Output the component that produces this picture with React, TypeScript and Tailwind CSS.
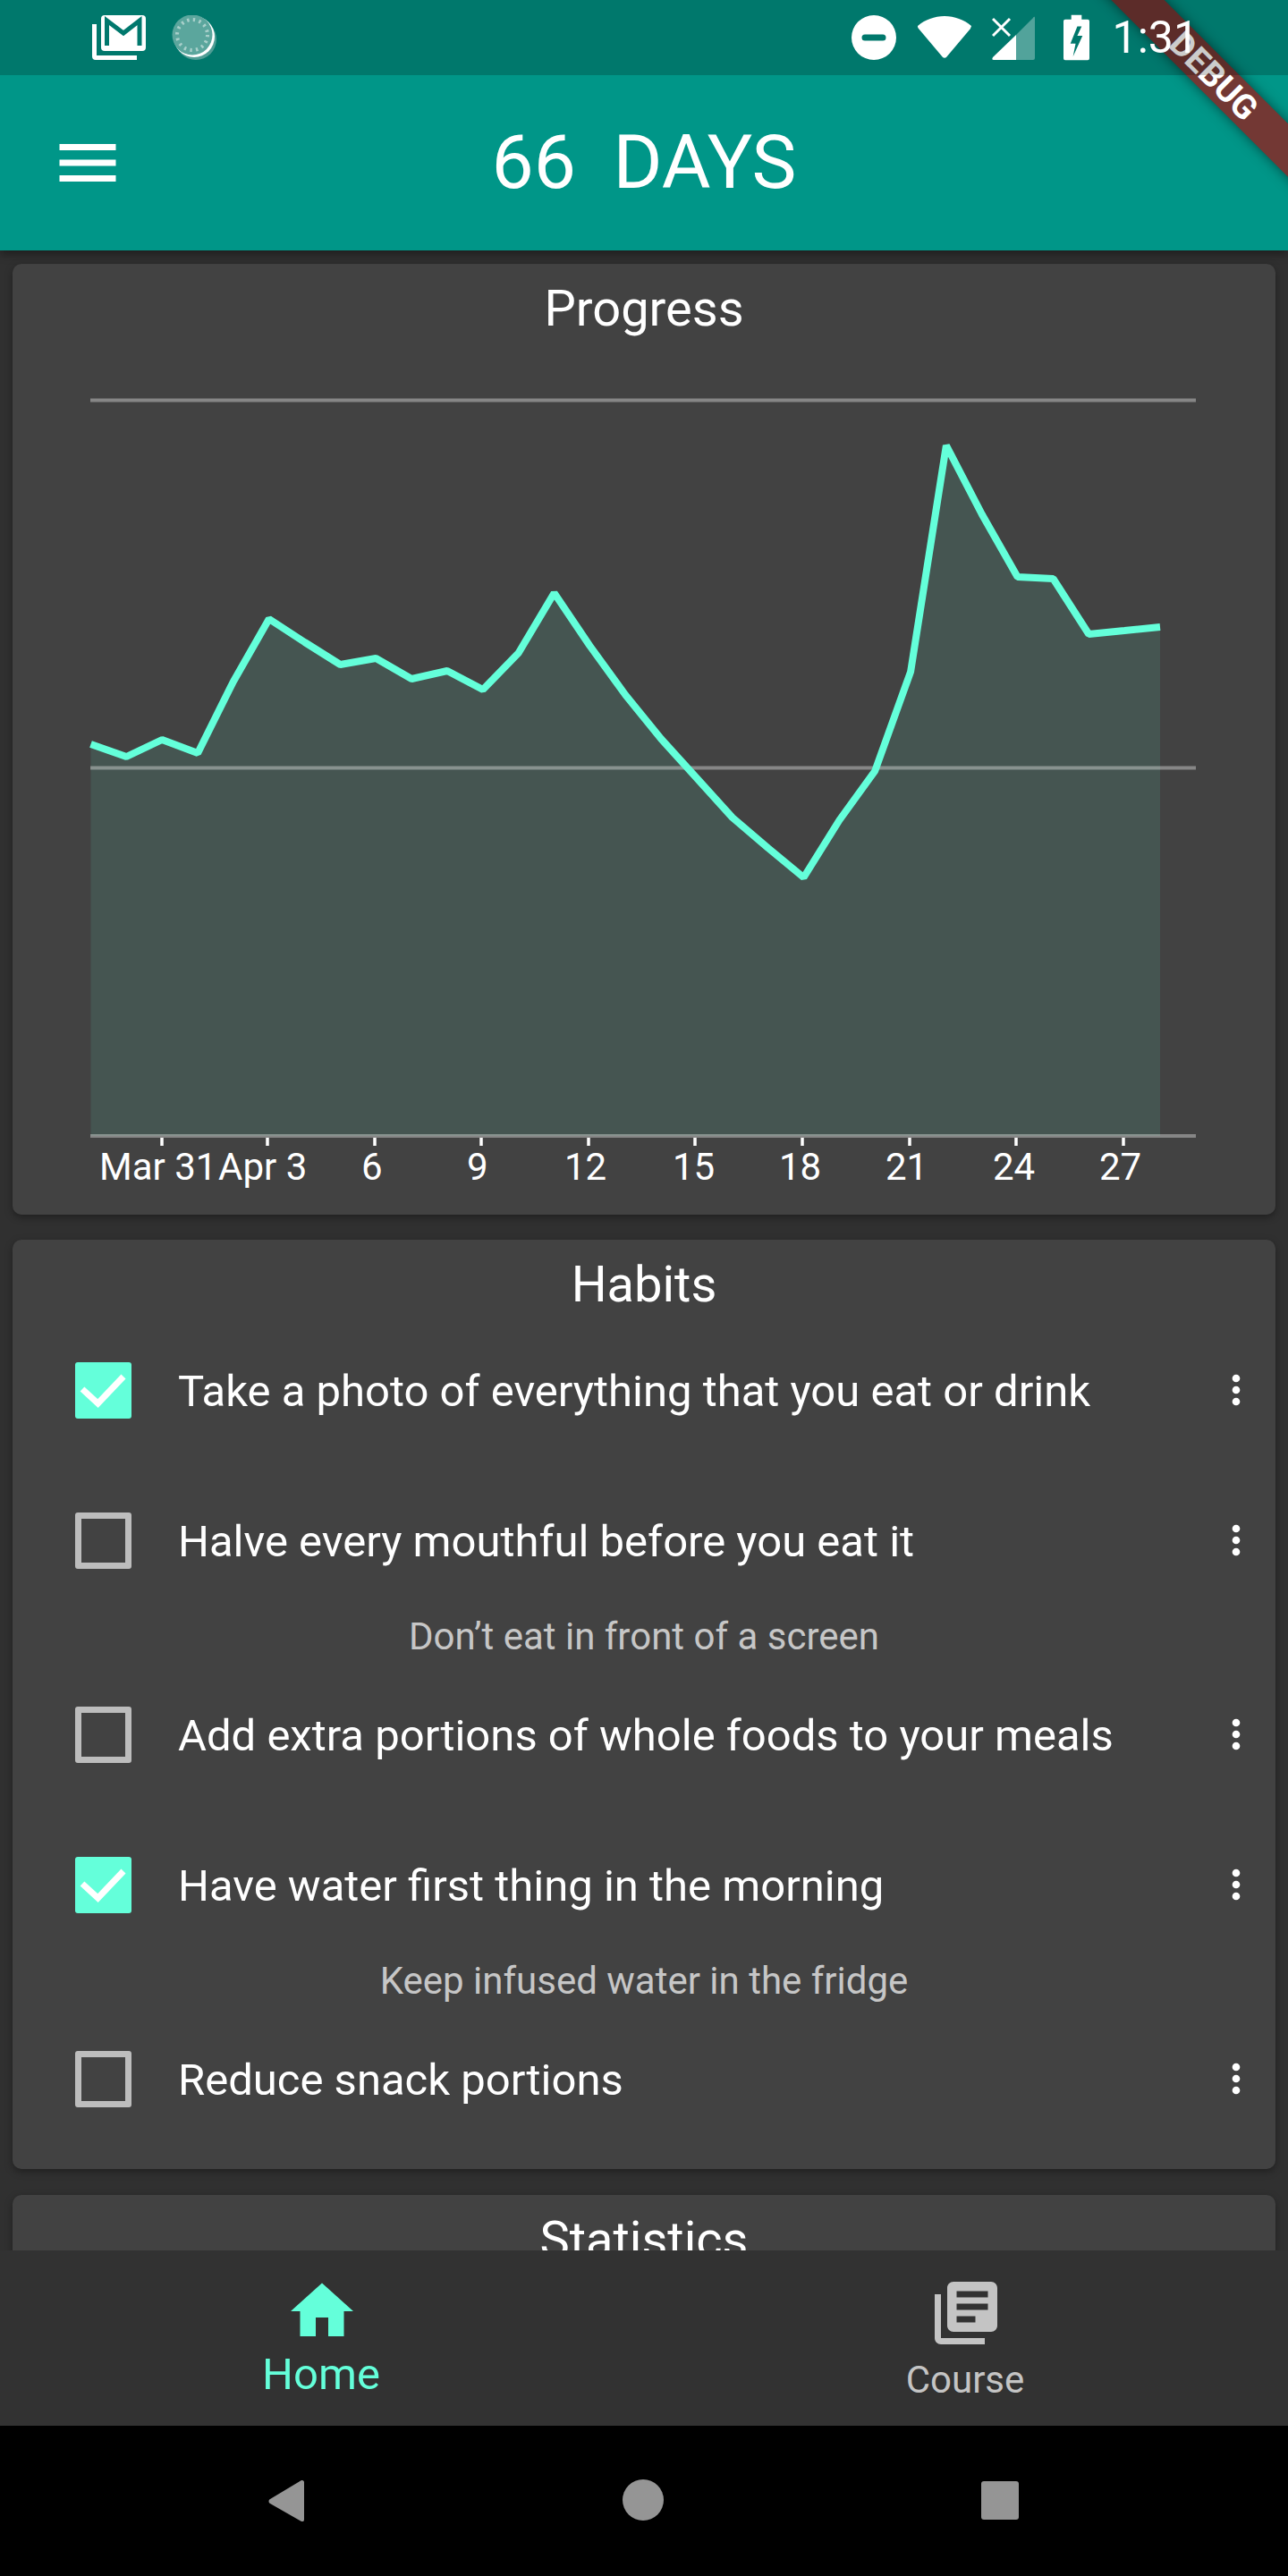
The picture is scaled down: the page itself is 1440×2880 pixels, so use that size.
import { MdHome, MdLibraryBooks, MdMenu, MdMoreVert } from "react-icons/md";

const FONT = "font-['Roboto',sans-serif]";

const points = [
  832, 846, 827, 842, 762, 692, 718, 743, 736, 759, 750, 771, 730, 663, 722, 777, 826, 870, 914, 948, 981, 917,
  862, 751, 498, 575, 645, 647, 709, 705, 701,
];
const chartLeft = 101.5;
const step = 39.85;
const coords = points.map((y, i) => `${(chartLeft + i * step).toFixed(1)},${y}`);

const ticks = [
  { x: 181, label: "Mar 31", left: 111 },
  { x: 299, label: "Apr 3", left: 244 },
  { x: 419, label: "6", left: 404 },
  { x: 538, label: "9", left: 522 },
  { x: 658, label: "12", left: 631 },
  { x: 777, label: "15", left: 752 },
  { x: 897, label: "18", left: 871 },
  { x: 1017, label: "21", left: 990 },
  { x: 1136, label: "24", left: 1110 },
  { x: 1256, label: "27", left: 1229 },
];

const habits = [
  { text: "Take a photo of everything that you eat or drink", done: true },
  { text: "Halve every mouthful before you eat it", done: false, hint: "Don’t eat in front of a screen" },
  { text: "Add extra portions of whole foods to your meals", done: false },
  { text: "Have water first thing in the morning", done: true, hint: "Keep infused water in the fridge" },
  { text: "Reduce snack portions", done: false },
];

function StatusBar() {
  return (
    <div className="absolute top-0 left-0 right-0 z-30 h-[84px] bg-black/20 flex items-center text-white">
      <svg viewBox="0 0 60 50" className="ml-[103px] w-[60px] h-[50px]">
        <path fill="white" d="M0 10h5v35h45v5H4a4 4 0 0 1-4-4z" />
        <rect x="10" y="0" width="50" height="40" rx="4" fill="white" />
        <polyline points="16.5,34 16.5,6 35,20 53,6 53,34" fill="none" stroke="#00786d" strokeWidth="5" />
      </svg>
      <svg viewBox="0 0 50 50" className="ml-[29px] w-[50px] h-[50px]">
        <circle cx="27" cy="27" r="23" fill="#4f9d95" />
        <circle cx="25" cy="24" r="23" fill="white" />
        <circle cx="23" cy="22" r="22.5" fill="#5ba69d" />
        <circle cx="23" cy="22" r="17" fill="none" stroke="#a9d0cb" strokeWidth="4" strokeDasharray="2.4 4.3" />
      </svg>
      <div className="ml-auto flex items-center">
        <svg viewBox="0 0 50 50" className="w-[50px] h-[50px]">
          <path
            fill="white"
            fillRule="evenodd"
            d="M25 0a25 25 0 1 0 0 50 25 25 0 0 0 0-50zM15 21.5h20a3.5 3.5 0 0 1 0 7H15a3.5 3.5 0 0 1 0-7z"
          />
        </svg>
        <svg viewBox="0 0 60 50" className="ml-[24px] w-[60px] h-[50px]">
          <path fill="white" d="M30 1c11 0 22 4 30 11 0 1-1 2-1 3L32 47c-1 1-3 1-4 0L1 15c-1-1-1-2-1-3C8 5 19 1 30 1z" />
        </svg>
        <svg viewBox="0 0 48 50" className="ml-[23px] w-[48px] h-[50px]">
          <path fill="white" fillOpacity="0.32" d="M46 3c1-2 2-1 2 0v45a2 2 0 0 1-2 2H27V22z" />
          <path fill="white" d="M27 22v28H2c-2 0-2-1-1-3z" />
          <path stroke="white" strokeWidth="3" fill="none" d="M1 4l19 19M20 4L1 23" />
        </svg>
        <svg viewBox="0 0 30 52" className="ml-[32px] w-[29px] h-[52px]">
          <path
            fill="white"
            fillRule="evenodd"
            d="M9 0h12v5h7a2 2 0 0 1 2 2v43a2 2 0 0 1-2 2H2a2 2 0 0 1-2-2V7a2 2 0 0 1 2-2h7zm7 13l-8 20h6l-3 15 11-24h-6l5-11z"
          />
        </svg>
        <span className={`ml-[26px] mr-[100px] text-[50px] leading-none ${FONT}`}>1:31</span>
      </div>
    </div>
  );
}

function Card({ children, className }: { children: React.ReactNode; className?: string }) {
  return (
    <div className={`mx-[14px] bg-[#424242] rounded-[10px] shadow-[0_3px_8px_rgba(0,0,0,0.35)] ${className ?? ""}`}>
      {children}
    </div>
  );
}

function ProgressChart() {
  return (
    <svg viewBox="14 295 1412 1063" className="w-full h-[1063px] absolute inset-0">
      <polygon points={`${chartLeft},1270 ${coords.join(" ")} 1297,1270`} fill="#64ffda" fillOpacity="0.1" />
      <g stroke="#ffffff" strokeOpacity="0.36" strokeWidth="4">
        <line x1="101" y1="447.5" x2="1337" y2="447.5" />
        <line x1="101" y1="858.5" x2="1337" y2="858.5" />
        <line x1="101" y1="1270" x2="1337" y2="1270" />
      </g>
      <polyline points={coords.join(" ")} fill="none" stroke="#64ffda" strokeWidth="8" strokeLinejoin="bevel" />
      <g stroke="#ffffff" strokeWidth="3.5">
        {ticks.map((t) => (
          <line key={t.label} x1={t.x} y1="1272" x2={t.x} y2="1281" />
        ))}
      </g>
    </svg>
  );
}

function HabitRow({ text, done, hint }: { text: string; done: boolean; hint?: string }) {
  return (
    <div>
      <div className="h-[98px] flex items-center">
        <div className="ml-[70px] w-[63px] shrink-0">
          {done ? (
            <svg viewBox="0 0 63 63" className="w-[63px] h-[63px]">
              <rect width="63" height="63" rx="3" fill="#64ffda" />
              <path d="M8 30l17.5 16L54 16" fill="none" stroke="white" strokeWidth="7" />
            </svg>
          ) : (
            <div className="w-[63px] h-[63px] rounded-[3px] border-[7px] border-[#bdbdbd]" />
          )}
        </div>
        <span className={`ml-[52px] pt-[2px] flex-1 text-[49px] leading-none text-white whitespace-nowrap ${FONT}`}>
          {text}
        </span>
        <MdMoreVert className="w-[52px] h-[52px] mr-[18px] text-white" />
      </div>
      {hint ? (
        <p className={`h-[119px] leading-[118px] text-center text-[42px] text-[#c6c6c6] ${FONT}`}>{hint}</p>
      ) : (
        <div className="h-[70px]" />
      )}
    </div>
  );
}

export default function App() {
  return (
    <div className={`relative w-[1440px] h-[2880px] overflow-hidden flex flex-col bg-[#303030] ${FONT}`}>
      <StatusBar />
      <header className="h-[280px] pt-[84px] bg-[#009688] shrink-0 flex items-center relative z-10 shadow-[0_4px_10px_rgba(0,0,0,0.4)]">
        <MdMenu className="absolute left-[56px] w-[84px] h-[84px] text-white" />
        <h1 className="w-full text-center text-[84px] leading-none text-white">66&nbsp;&nbsp;DAYS</h1>
      </header>

      <main className="flex-1 overflow-hidden pt-[15px]">
        <Card className="h-[1063px] relative">
          <ProgressChart />
          <h2 className="relative pt-[20px] text-center text-[56px] leading-[60px] text-white">Progress</h2>
          {ticks.map((t) => (
            <span
              key={t.label}
              className="absolute top-[989px] text-[42px] leading-none text-white whitespace-nowrap"
              style={{ left: t.left - 14 }}
            >
              {t.label}
            </span>
          ))}
        </Card>

        <Card className="mt-[28px] h-[1039px]">
          <h2 className="pt-[20px] text-center text-[56px] leading-[60px] text-white">Habits</h2>
          <div className="mt-[39px]">
            {habits.map((h) => (
              <HabitRow key={h.text} text={h.text} done={h.done} hint={h.hint} />
            ))}
          </div>
        </Card>

        <Card className="mt-[29px] h-[200px]">
          <h2 className="pt-[20px] text-center text-[56px] leading-[60px] text-white">Statistics</h2>
        </Card>
      </main>

      <nav className="h-[196px] bg-[#323232] shrink-0 flex relative">
        <div className="flex-1 flex flex-col items-center pt-[26px] text-[#64ffda]">
          <MdHome className="w-[84px] h-[84px]" />
          <span className="text-[49px] leading-none mt-[4px] pr-[2px]">Home</span>
        </div>
        <div className="flex-1 flex flex-col items-center pt-[28px] text-[#c4c4c4]">
          <MdLibraryBooks className="w-[84px] h-[84px]" />
          <span className="text-[42px] leading-none mt-[12px] pr-[2px]">Course</span>
        </div>
      </nav>

      <div className="h-[168px] bg-black shrink-0 flex items-center justify-center relative">
        <svg viewBox="0 0 40 46" className="absolute left-[300px] top-[61px] w-[40px] h-[46px]">
          <path fill="#959595" d="M38 0c1 0 2 1 2 2v42c0 2-2 3-3 2L2 26c-2-1-2-4 0-5L37 0z" />
        </svg>
        <div className="absolute left-[696px] top-[60px] w-[46px] h-[46px] rounded-full bg-[#959595]" />
        <div className="absolute left-[1097px] top-[62px] w-[42px] h-[43px] rounded-[3px] bg-[#959595]" />
      </div>

      <div className="absolute z-20 top-[64px] right-[-117px] w-[400px] h-[42px] rotate-45 bg-[#733834] flex items-center justify-center shadow-[0_0_14px_rgba(0,0,0,0.5)]">
        <span className={`text-[38px] leading-none font-bold text-white ${FONT}`}>DEBUG</span>
      </div>
    </div>
  );
}
